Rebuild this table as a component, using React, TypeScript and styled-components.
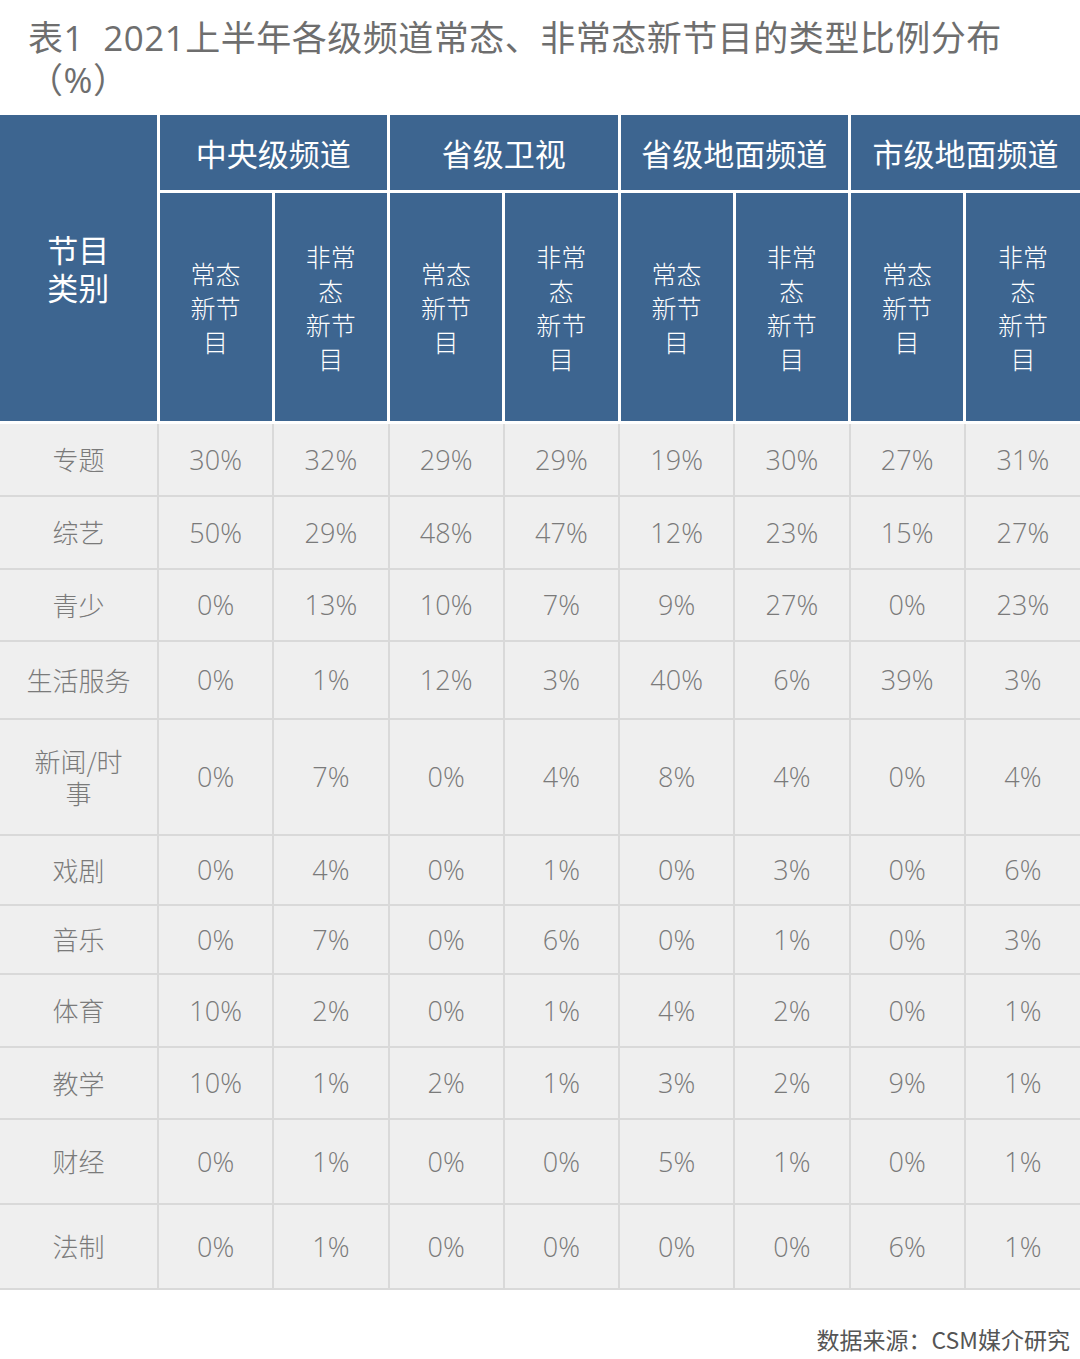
import React from "react";
import styled, { createGlobalStyle } from "styled-components";

const GlobalStyle = createGlobalStyle`
  body {
    margin: 0;
    background: #ffffff;
    font-family: "Open Sans", "Noto Sans CJK SC", sans-serif;
  }
`;

type Row = { label: React.ReactNode; values: string[]; h: number };

const groups = ["中央级频道", "省级卫视", "省级地面频道", "市级地面频道"];

const rows: Row[] = [
  { label: "专题", values: ["30%", "32%", "29%", "29%", "19%", "30%", "27%", "31%"], h: 73 },
  { label: "综艺", values: ["50%", "29%", "48%", "47%", "12%", "23%", "15%", "27%"], h: 73 },
  { label: "青少", values: ["0%", "13%", "10%", "7%", "9%", "27%", "0%", "23%"], h: 72 },
  { label: "生活服务", values: ["0%", "1%", "12%", "3%", "40%", "6%", "39%", "3%"], h: 78 },
  {
    label: (
      <>
        新闻/时<br />事
      </>
    ),
    values: ["0%", "7%", "0%", "4%", "8%", "4%", "0%", "4%"],
    h: 116,
  },
  { label: "戏剧", values: ["0%", "4%", "0%", "1%", "0%", "3%", "0%", "6%"], h: 70 },
  { label: "音乐", values: ["0%", "7%", "0%", "6%", "0%", "1%", "0%", "3%"], h: 69 },
  { label: "体育", values: ["10%", "2%", "0%", "1%", "4%", "2%", "0%", "1%"], h: 73 },
  { label: "教学", values: ["10%", "1%", "2%", "1%", "3%", "2%", "9%", "1%"], h: 72 },
  { label: "财经", values: ["0%", "1%", "0%", "0%", "5%", "1%", "0%", "1%"], h: 85 },
  { label: "法制", values: ["0%", "1%", "0%", "0%", "0%", "0%", "6%", "1%"], h: 85 },
];

const App = () => {
  return (
    <Page>
      <GlobalStyle />
      <Title>
        表1&nbsp;&nbsp;2021上半年各级频道常态、非常态新节目的类型比例分布
        <br />
        （%）
      </Title>
      <Table>
        <colgroup>
          <col style={{ width: 158 }} />
          {Array.from({ length: 8 }).map((_, i) => (
            <col key={i} />
          ))}
        </colgroup>
        <thead>
          <tr>
            <CornerCell rowSpan={2}>
              节目
              <br />
              类别
            </CornerCell>
            {groups.map((g) => (
              <GroupCell key={g} colSpan={2}>
                {g}
              </GroupCell>
            ))}
          </tr>
          <tr>
            {groups.map((g) => (
              <React.Fragment key={g}>
                <SubCell>
                  常态
                  <br />
                  新节
                  <br />目
                </SubCell>
                <SubCell>
                  非常
                  <br />态<br />
                  新节
                  <br />目
                </SubCell>
              </React.Fragment>
            ))}
          </tr>
        </thead>
        <tbody>
          {rows.map((r, i) => (
            <BodyRow key={i} $h={r.h}>
              <LabelCell>{r.label}</LabelCell>
              {r.values.map((v, j) => (
                <ValueCell key={j}>{v}</ValueCell>
              ))}
            </BodyRow>
          ))}
        </tbody>
      </Table>
      <Source>数据来源：CSM媒介研究</Source>
    </Page>
  );
};

export default App;

const Page = styled.div`
  width: 1080px;
  height: 1359px;
  overflow: hidden;
  background: #ffffff;
`;

const Title = styled.h1`
  margin: 0;
  padding: 17px 0 0 28px;
  height: 115px;
  box-sizing: border-box;
  font-family: "Open Sans", "Noto Sans CJK SC", sans-serif;
  font-weight: 400;
  font-size: 35px;
  letter-spacing: 0.5px;
  line-height: 42px;
  color: #6e6e6e;
  white-space: nowrap;
`;

const Table = styled.table`
  width: 1080px;
  table-layout: fixed;
  border-collapse: collapse;
  border-spacing: 0;
`;

const HeadBase = styled.th`
  background: #3d6590;
  color: #ffffff;
  font-family: "Noto Sans CJK SC", sans-serif;
  text-align: center;
  vertical-align: middle;
  padding: 0;
  border: 3px solid #ffffff;
  &:first-child {
    border-left: none;
  }
  &:last-child {
    border-right: none;
  }
`;

const CornerCell = styled(HeadBase)`
  font-size: 31px;
  font-weight: 400;
  line-height: 38px;
  border-top: none;
`;

const GroupCell = styled(HeadBase)`
  height: 75px;
  font-size: 31px;
  font-weight: 400;
  border-top: none;
`;

const SubCell = styled(HeadBase)`
  height: 228px;
  font-size: 25px;
  font-weight: 300;
  line-height: 34px;
  &:first-child {
    border-left: 3px solid #ffffff;
  }
`;

const BodyRow = styled.tr<{ $h: number }>`
  height: ${(p) => p.$h}px;
`;

const Cell = styled.td`
  background: #efefef;
  color: #7a7a7a;
  text-align: center;
  vertical-align: middle;
  padding: 0;
  border: 2px solid #d9d9d9;
  &:first-child {
    border-left: none;
  }
  &:last-child {
    border-right: none;
  }
`;

const LabelCell = styled(Cell)`
  font-family: "Noto Sans CJK SC", sans-serif;
  font-weight: 300;
  font-size: 26px;
  line-height: 32px;
`;

const ValueCell = styled(Cell)`
  font-family: "Open Sans", "Noto Sans CJK SC", sans-serif;
  font-weight: 300;
  font-size: 27px;
`;

const Source = styled.div`
  text-align: right;
  padding: 32px 10px 0 0;
  font-family: "Noto Sans CJK SC", sans-serif;
  font-size: 23px;
  color: #555555;
`;
